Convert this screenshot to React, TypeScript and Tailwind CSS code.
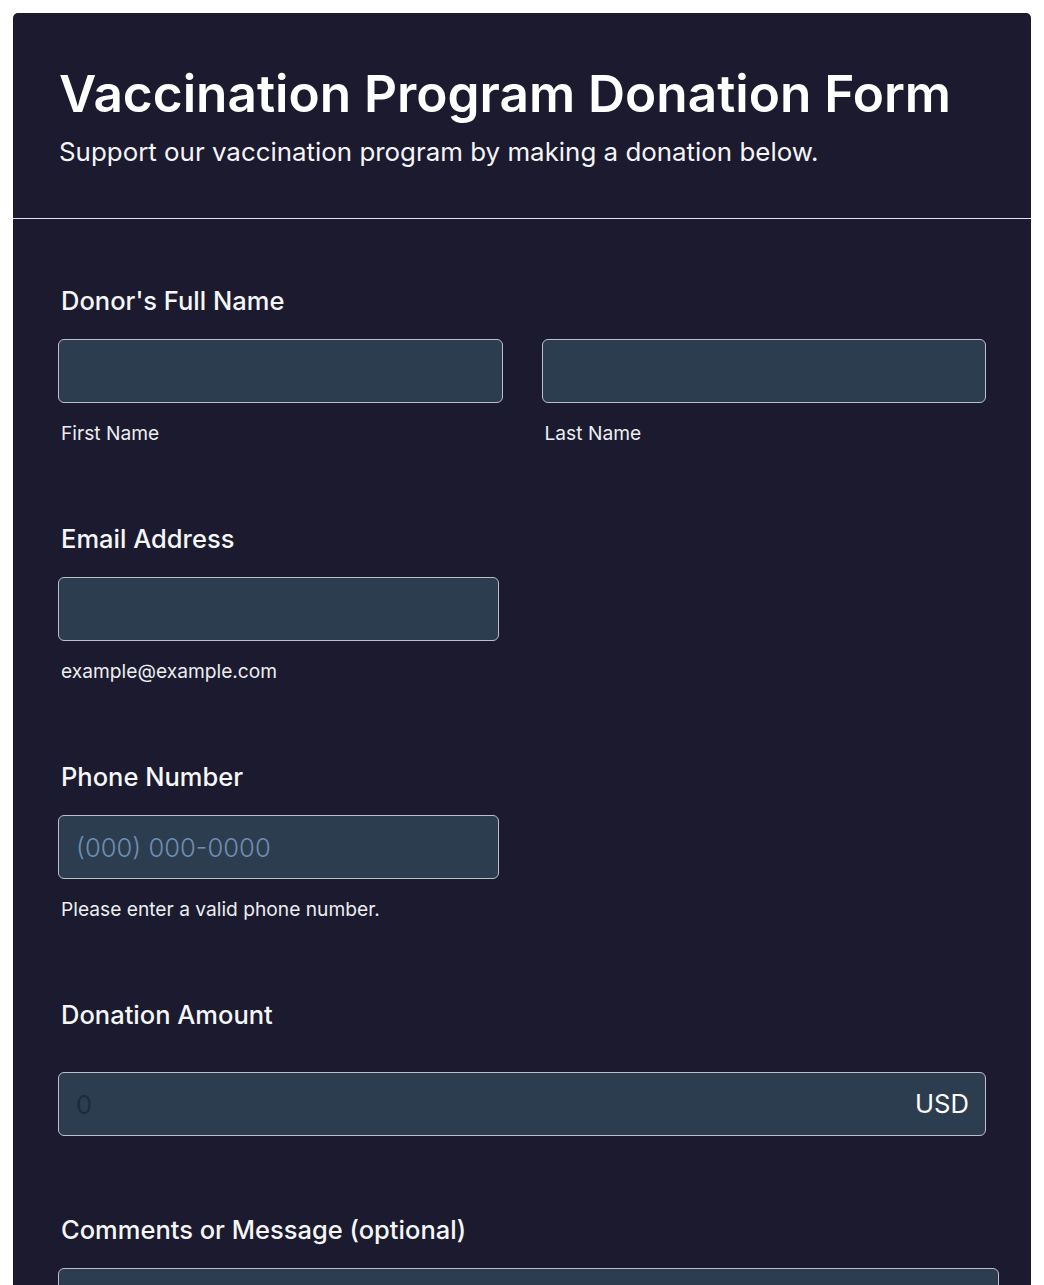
import { useState } from 'react';

function Section({ label, children }: { label: string; children: React.ReactNode }) {
    return (
        <div className="mt-[78px] first:mt-0">
            <label className="block pl-[3px] text-[25.5px] leading-[32px] font-medium text-[#f5f6f8]">{label}</label>
            {children}
        </div>
    );
}

export default function App() {
    const [first, setFirst] = useState('');
    const [last, setLast] = useState('');
    const [email, setEmail] = useState('');
    const [phone, setPhone] = useState('');
    const [amount, setAmount] = useState('');
    const [comments, setComments] = useState('');

    const inputCls = "block w-full h-[64px] rounded-[6px] border-[1.5px] border-[#bcbfc8] bg-[#2d3d50] px-[17px] text-[25.6px] text-white outline-none";
    const hintCls = "mt-[18px] pl-[3px] text-[19.2px] leading-[24px] text-[#eceef2]";

    return (
        <div className="min-h-screen bg-white p-[13px] pb-0" style={{ fontFamily: 'Inter, "Noto Sans", sans-serif' }}>
            <div className="rounded-t-[5px] bg-[#1b1a2e] overflow-hidden">
                <div className="px-[46px] pt-[49px] pb-[50px] border-b border-[#e2e3ea]">
                    <h1 className="text-[51.3px] leading-[62px] font-semibold text-white whitespace-nowrap">Vaccination Program Donation Form</h1>
                    <p className="mt-[12px] text-[25.9px] leading-[32px] text-[#f5f5f7]">Support our vaccination program by making a donation below.</p>
                </div>

                <div className="px-[45px] pt-[66px] pb-[40px]">
                    <Section label="Donor's Full Name">
                        <div className="mt-[22px] grid grid-cols-2 gap-[39px]">
                            <div>
                                <input className={inputCls} value={first} onChange={e => setFirst(e.target.value)} />
                                <div className={hintCls}>First Name</div>
                            </div>
                            <div>
                                <input className={inputCls} value={last} onChange={e => setLast(e.target.value)} />
                                <div className={hintCls}>Last Name</div>
                            </div>
                        </div>
                    </Section>

                    <Section label="Email Address">
                        <div className="mt-[22px] w-[441px]">
                            <input type="email" className={inputCls} value={email} onChange={e => setEmail(e.target.value)} />
                            <div className={hintCls}>example@example.com</div>
                        </div>
                    </Section>

                    <Section label="Phone Number">
                        <div className="mt-[22px] w-[441px]">
                            <input
                                type="tel"
                                placeholder="(000) 000-0000"
                                className={inputCls + " font-light placeholder:text-[#6f8db3]"}
                                value={phone}
                                onChange={e => setPhone(e.target.value)}
                            />
                            <div className={hintCls}>Please enter a valid phone number.</div>
                        </div>
                    </Section>

                    <Section label="Donation Amount">
                        <div className="mt-[41px] relative">
                            <input
                                type="number"
                                placeholder="0"
                                className={inputCls + " pr-[80px] placeholder:text-[#1f2b3c]"}
                                value={amount}
                                onChange={e => setAmount(e.target.value)}
                            />
                            <span className="absolute right-[17px] top-1/2 -translate-y-1/2 text-[25.6px] text-white">USD</span>
                        </div>
                    </Section>

                    <div className="mt-[78px]">
                        <label className="block pl-[3px] text-[25.5px] leading-[32px] font-medium text-[#f5f6f8]">Comments or Message (optional)</label>
                        <textarea
                            className="mt-[22px] block w-[941px] h-[160px] rounded-[6px] border-[1.5px] border-[#bcbfc8] bg-[#2d3d50] px-[17px] py-[14px] text-[22px] text-white outline-none resize-none"
                            value={comments}
                            onChange={e => setComments(e.target.value)}
                        />
                    </div>
                </div>
            </div>
        </div>
    );
}
